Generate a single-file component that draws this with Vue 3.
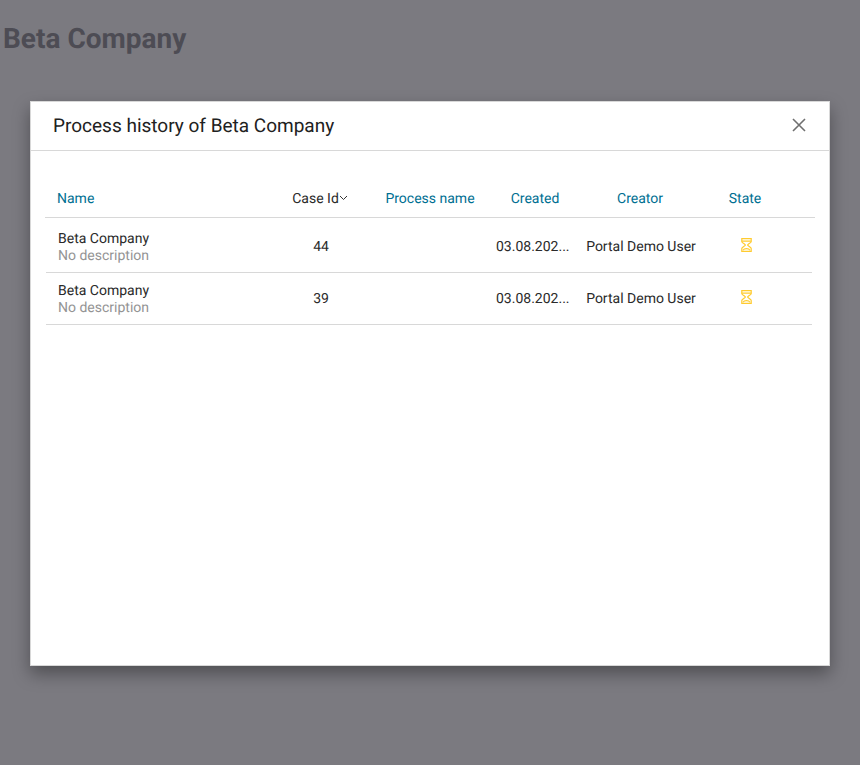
<script setup>
const columns = [
  { label: 'Name', cls: 'start' },
  { label: 'Case Id', active: true },
  { label: 'Process name' },
  { label: 'Created' },
  { label: 'Creator' },
  { label: 'State' }
]
const rows = [
  { id: 44, name: 'Beta Company', description: 'No description', created: '03.08.202...', creator: 'Portal Demo User' },
  { id: 39, name: 'Beta Company', description: 'No description', created: '03.08.202...', creator: 'Portal Demo User' }
]
</script>

<template>
  <div class="page">
    <h1 class="page-title">Beta Company</h1>
    <div class="overlay">
      <section class="dialog">
        <header class="dialog-header">
          <h2 class="dialog-title">Process history of Beta Company</h2>
          <button class="close" aria-label="Close">
            <svg width="14" height="14" viewBox="0 0 14 14"><path d="M1 1L13 13M13 1L1 13" stroke="#6f6f6f" stroke-width="1.6" fill="none" /></svg>
          </button>
        </header>
        <div class="dialog-body">
          <div class="table-head">
            <div v-for="c in columns" :key="c.label" class="th" :class="[c.cls, { active: c.active }]">
              {{ c.label }}<svg v-if="c.active" class="chevron" width="9" height="6" viewBox="0 0 9 6"><path d="M1 1L4.5 4.5L8 1" stroke="#333" stroke-width="1" fill="none" /></svg>
            </div>
          </div>
          <div class="rows">
            <div v-for="r in rows" :key="r.id" class="row">
              <div class="name-cell">
                <div class="name">{{ r.name }}</div>
                <div class="desc">{{ r.description }}</div>
              </div>
              <div class="td">{{ r.id }}</div>
              <div class="td"></div>
              <div class="td created">{{ r.created }}</div>
              <div class="td">{{ r.creator }}</div>
              <div class="td state">
                <svg class="hourglass" width="11" height="14" viewBox="0 0 11 14" fill="none" stroke="#ffcb2f" stroke-width="1.2">
                  <path d="M.8 .7H10.2V3.5C10.2 5 7.2 5.8 6.6 7C7.2 8.2 10.2 9 10.2 10.5V13.3H.8V10.5C.8 9 3.8 8.2 4.4 7C3.8 5.8 .8 5 .8 3.5Z" />
                  <path d="M.8 3.2H10.2M2 12.2C3.2 10 7.8 10 9 12.2" />
                </svg>
              </div>
            </div>
          </div>
        </div>
      </section>
    </div>
  </div>
</template>

<style>
html, body { margin: 0; background: #fff; }
</style>

<style scoped>
.page {
  height: 765px;
  font-family: Roboto, "Liberation Sans", sans-serif;
  text-rendering: geometricPrecision;
  position: relative;
  overflow: hidden;
}
.page-title {
  margin: 0;
  padding: 23px 0 0 3px;
  font-size: 28px;
  line-height: 32px;
  font-weight: 700;
  color: #838389;
}
.overlay {
  position: absolute;
  inset: 0;
  background: rgba(46, 45, 54, 0.63);
  padding: 101px 30px 99px;
  box-sizing: border-box;
}
.dialog {
  height: 565px;
  background: #fff;
  border: 1px solid #d8d8d8;
  box-sizing: border-box;
  box-shadow: 0 8px 16px rgba(0, 0, 0, 0.35);
}
.dialog-header {
  height: 49px;
  border-bottom: 1px solid #d8d8d8;
  box-sizing: border-box;
  display: flex;
  align-items: center;
  justify-content: space-between;
  padding: 0 23px 2px 22px;
}
.dialog-title {
  margin: 0;
  font-size: 19px;
  font-weight: 400;
  color: #212121;
}
.close {
  border: 0;
  background: none;
  padding: 0;
  display: flex;
}
.dialog-body {
  padding: 30px 14px 0;
}
.table-head {
  display: grid;
  grid-template-columns: 227.5px repeat(5, 105px) 17.5px;
  height: 37px;
  align-items: center;
  border-bottom: 1px solid #d8d8d8;
  box-sizing: border-box;
}
.th {
  font-size: 14px;
  color: #006f92;
  text-align: center;
  white-space: nowrap;
}
.th.start {
  text-align: left;
  padding-left: 12px;
}
.th.active {
  color: #2a2a2a;
  padding-right: 10px;
}
.chevron {
  vertical-align: 2px;
}
.rows {
  padding-top: 3px;
}
.row {
  display: grid;
  grid-template-columns: 222px 106px 106px 106px 110px 100px;
  width: 766px;
  margin-left: 1px;
  height: 52px;
  align-items: center;
  border-bottom: 1px solid #d8d8d8;
  box-sizing: border-box;
}
.name-cell {
  padding: 2px 0 0 12px;
  line-height: 17px;
  font-size: 14px;
}
.name { color: #2a2a2a; }
.desc { color: #949494; }
.td {
  font-size: 14px;
  color: #2a2a2a;
  text-align: center;
  white-space: nowrap;
}
.created {
  text-align: left;
  padding-left: 16px;
}
.state {
  display: flex;
  justify-content: center;
  padding-bottom: 3px;
}
</style>
